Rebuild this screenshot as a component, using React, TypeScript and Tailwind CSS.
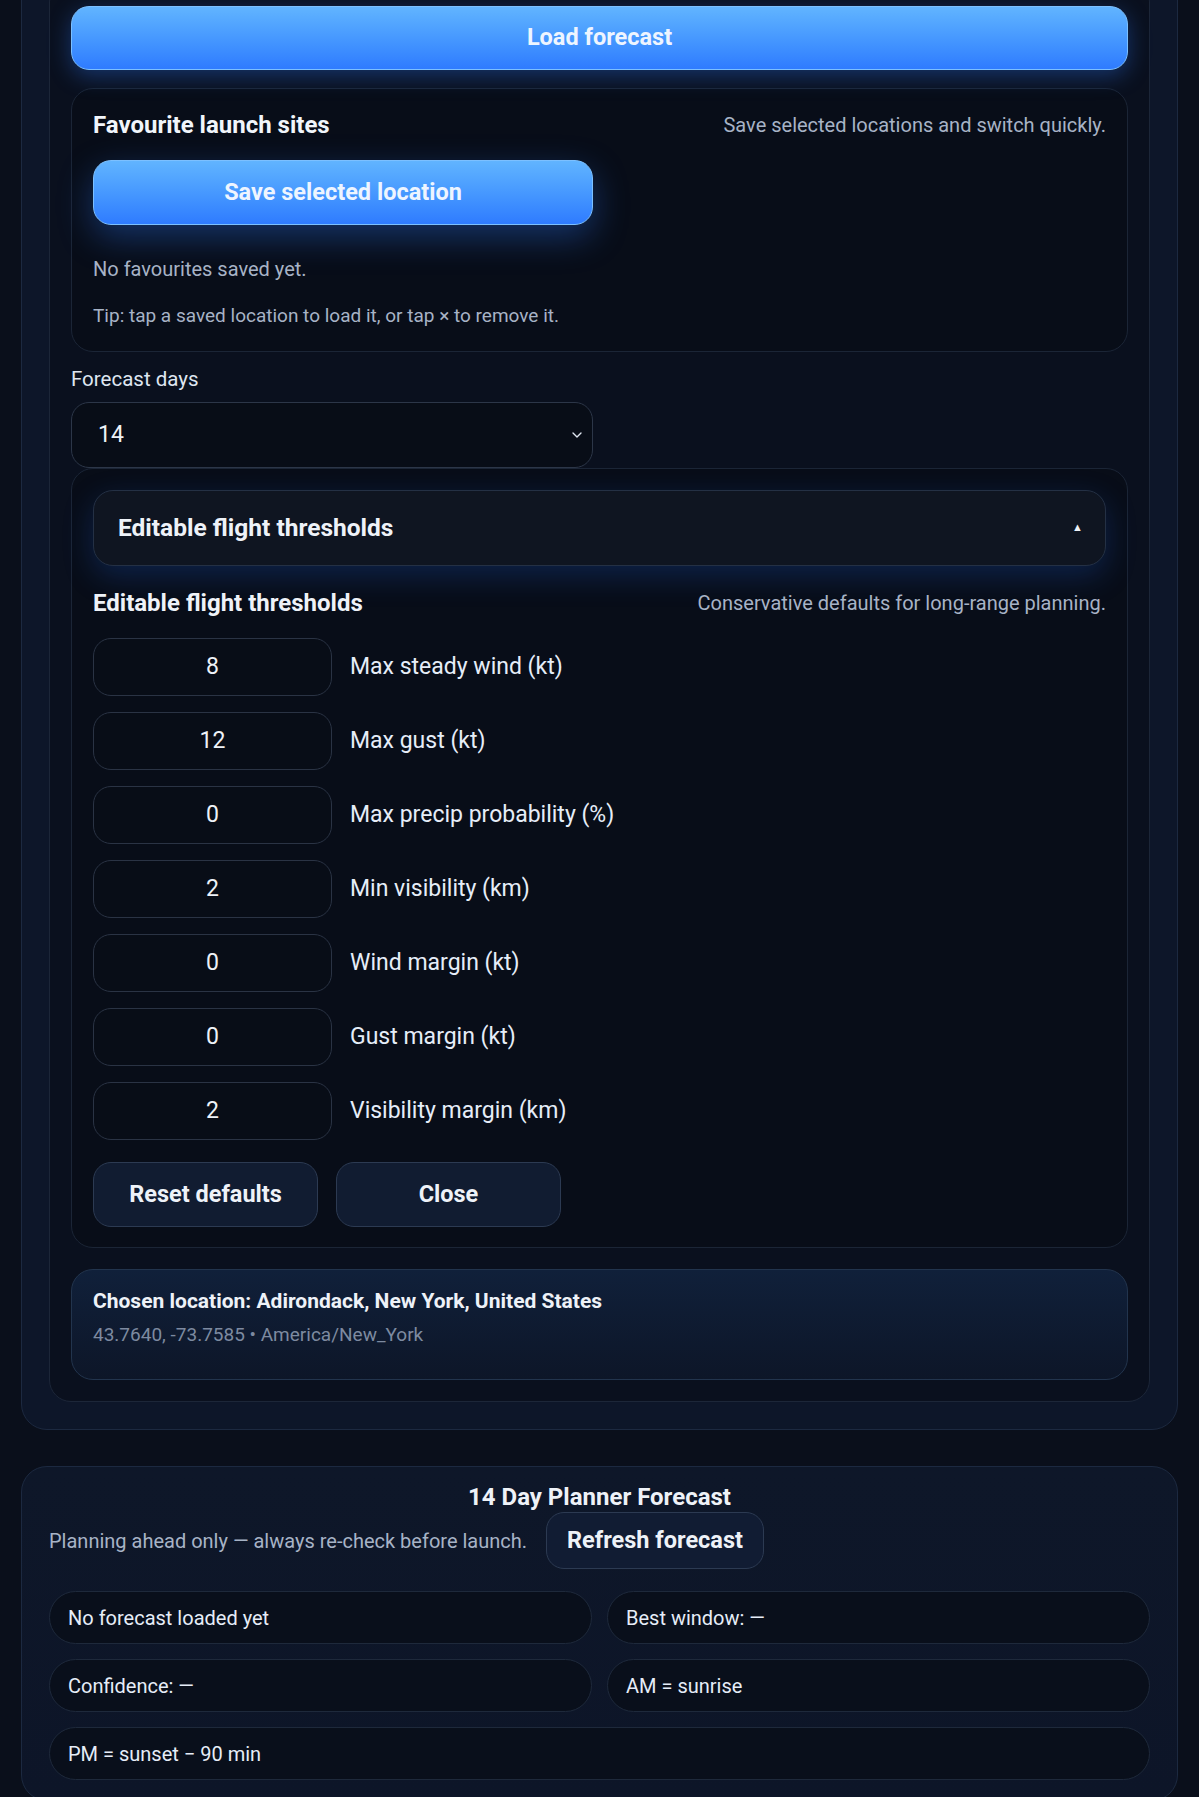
import { ChevronDown } from "lucide-react";

const thresholds = [
  { value: "8", label: "Max steady wind (kt)" },
  { value: "12", label: "Max gust (kt)" },
  { value: "0", label: "Max precip probability (%)" },
  { value: "2", label: "Min visibility (km)" },
  { value: "0", label: "Wind margin (kt)" },
  { value: "0", label: "Gust margin (kt)" },
  { value: "2", label: "Visibility margin (km)" },
];

const pill =
  "h-[53px] rounded-full border border-[#1e293b] bg-[#090f1b] pl-[18px] flex items-center text-[20px] text-[#e6edf8]";

export default function App() {
  return (
    <div
      className="min-h-screen w-full overflow-hidden bg-[#0a0f1b] text-[#e6edf8] px-[21px] pb-10"
      style={{ fontFamily: "Roboto, 'Noto Sans', sans-serif" }}
    >
      {/* setup card (scrolled so its top is off screen) */}
      <div className="-mt-[48px] rounded-[26px] border border-[#1c2940] bg-[#0d1629] p-[27px]">
        <div className="rounded-[22px] border border-[#1c2638] bg-[#0a101e] px-[21px] pb-[21px] pt-[25px]">
          <button className="w-full h-[64px] rounded-[18px] border border-[#7cc0ff] bg-gradient-to-b from-[#61b4ff] to-[#2f7bff] text-[23.5px] font-bold text-[#eef5ff] shadow-[0_6px_22px_rgba(47,123,255,0.35)]">
            Load forecast
          </button>

          <div className="mt-[18px] rounded-[22px] border border-[#1b2536] bg-[#080d18] px-[21px] pt-[22px] pb-[23px]">
            <div className="flex items-center justify-between h-[28px]">
              <h3 className="text-[24px] font-bold text-[#f1f5fb]">Favourite launch sites</h3>
              <span className="text-[20px] text-[#a7b3c6]">Save selected locations and switch quickly.</span>
            </div>
            <button className="mt-[21px] w-[500px] h-[65px] rounded-[18px] border border-[#7cc0ff] bg-gradient-to-b from-[#61b4ff] to-[#2f7bff] text-[23.5px] font-bold text-[#eef5ff] shadow-[0_12px_34px_rgba(47,123,255,0.35)]">
              Save selected location
            </button>
            <p className="mt-[32px] text-[20px] leading-[24px] text-[#a7b3c6]">No favourites saved yet.</p>
            <p className="mt-[23px] text-[19px] leading-[24px] text-[#a7b3c6]">
              Tip: tap a saved location to load it, or tap × to remove it.
            </p>
          </div>

          <div className="mt-[15px] grid grid-cols-2 gap-[14px]">
            <div>
              <label className="block text-[20.5px] leading-[24px] text-[#dfe6f1]">Forecast days</label>
              <div className="relative mt-[11px]">
                <div className="h-[66px] rounded-[18px] border border-[#2c3648] bg-[#080d17] pl-[26px] flex items-center text-[23px] text-[#eef2f8]">
                  14
                </div>
                <ChevronDown className="absolute right-[8px] top-[25px] text-[#dfe6f1]" size={16} strokeWidth={2} />
              </div>
            </div>
          </div>

          <div className="rounded-[22px] border border-[#1b2536] bg-[#080d18] px-[21px] pt-[21px] pb-[20px]">
            <div className="h-[76px] rounded-[20px] border border-[#243044] bg-[#0f1521] pl-[24px] pr-[22px] flex items-center justify-between shadow-[0_10px_30px_rgba(30,90,200,0.28)]">
              <span className="text-[24.5px] font-bold text-[#eef2f8]">Editable flight thresholds</span>
              <span className="text-[11px] text-[#eef2f8]">▲</span>
            </div>

            <div className="mt-[24px] flex items-center justify-between h-[26px]">
              <h3 className="text-[24px] font-bold text-[#eef2f8]">Editable flight thresholds</h3>
              <span className="text-[20px] text-[#a7b3c6]">Conservative defaults for long-range planning.</span>
            </div>

            <div className="mt-[22px] flex flex-col gap-[16px]">
              {thresholds.map((t) => (
                <div key={t.label} className="flex items-center gap-[18px]">
                  <div className="w-[239px] h-[58px] rounded-[18px] border border-[#2a3344] bg-[#080d17] flex items-center justify-center text-[23px] text-[#eef2f8]">
                    {t.value}
                  </div>
                  <span className="text-[23px] text-[#e6edf8]">{t.label}</span>
                </div>
              ))}
            </div>

            <div className="mt-[22px] flex gap-[18px]">
              <button className="w-[225px] h-[65px] rounded-[18px] border border-[#2c3a52] bg-[#111c31] text-[23.5px] font-bold text-[#eef2f8]">
                Reset defaults
              </button>
              <button className="w-[225px] h-[65px] rounded-[18px] border border-[#2c3a52] bg-[#111c31] text-[23.5px] font-bold text-[#eef2f8]">
                Close
              </button>
            </div>
          </div>

          <div className="mt-[21px] rounded-[22px] border border-[#22344d] bg-gradient-to-b from-[#10203a] to-[#0d1628] px-[21px] pt-[18px] pb-[32px]">
            <div className="text-[21px] leading-[26px] font-bold text-[#eef2f8]">
              Chosen location: Adirondack, New York, United States
            </div>
            <div className="mt-[9px] text-[19px] leading-[24px] text-[#7d8aa0]">
              43.7640, -73.7585 • America/New_York
            </div>
          </div>
        </div>
      </div>

      {/* planner card */}
      <div className="mt-[36px] rounded-[26px] border border-[#1c2940] bg-gradient-to-b from-[#0e1729] to-[#0d1528] px-[27px] pt-[16px] pb-[20px]">
        <h2 className="text-center text-[24px] leading-[28px] font-bold text-[#eef2f8]">14 Day Planner Forecast</h2>
        <div className="mt-[1px] flex items-center gap-[19px]">
          <span className="text-[20px] text-[#a7b3c6]">Planning ahead only — always re-check before launch.</span>
          <button className="h-[57px] px-[20px] rounded-[18px] border border-[#2c3a52] bg-[#111c33] text-[23.5px] font-bold text-[#eef2f8]">
            Refresh forecast
          </button>
        </div>
        <div className="mt-[22px] grid grid-cols-2 gap-[15px]">
          <div className={pill}>No forecast loaded yet</div>
          <div className={pill}>Best window: —</div>
          <div className={pill}>Confidence: —</div>
          <div className={pill}>AM = sunrise</div>
          <div className={`col-span-2 ${pill}`}>PM = sunset − 90 min</div>
        </div>
      </div>
    </div>
  );
}
